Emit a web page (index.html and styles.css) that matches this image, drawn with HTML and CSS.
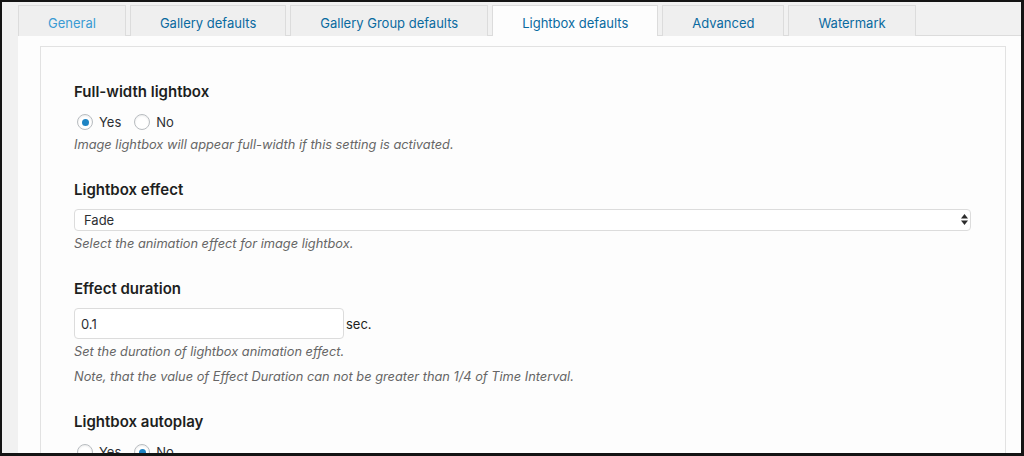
FILE: index.html
```html
<!DOCTYPE html>
<html lang="en">
<head>
    <meta charset="UTF-8">
    <meta name="viewport" content="width=device-width, initial-scale=1.0">
    <title>Lightbox defaults</title>
    <link rel="stylesheet" href="styles.css">
</head>
<body>
    <div class="frame">
        <!-- Settings tabs -->
        <div class="tabs">
            <a class="tab tab-general" href="#">General</a>
            <a class="tab" href="#">Gallery defaults</a>
            <a class="tab" href="#">Gallery Group defaults</a>
            <a class="tab active" href="#">Lightbox defaults</a>
            <a class="tab" href="#">Advanced</a>
            <a class="tab" href="#">Watermark</a>
        </div>

        <div class="panel">
            <div class="box">

                <!-- Full-width lightbox -->
                <div class="field">
                    <h3>Full-width lightbox</h3>
                    <div class="radios">
                        <label><input type="radio" name="fullwidth" checked> Yes</label>
                        <label><input type="radio" name="fullwidth"> No</label>
                    </div>
                    <p class="desc">Image lightbox will appear full-width if this setting is activated.</p>
                </div>

                <!-- Lightbox effect -->
                <div class="field">
                    <h3>Lightbox effect</h3>
                    <div class="select-wrap">
                        <select>
                            <option>Fade</option>
                        </select>
                        <svg class="select-arrows" width="7" height="11" viewBox="0 0 7 11">
                            <path d="M3.5 0 L7 4.5 L0 4.5 Z" fill="#2b2b2b"/>
                            <path d="M0 6.5 L7 6.5 L3.5 11 Z" fill="#2b2b2b"/>
                        </svg>
                    </div>
                    <p class="desc">Select the animation effect for image lightbox.</p>
                </div>

                <!-- Effect duration -->
                <div class="field">
                    <h3>Effect duration</h3>
                    <div class="duration">
                        <input type="text" class="text-input" value="0.1">
                        <span class="unit">sec.</span>
                    </div>
                    <p class="desc">Set the duration of lightbox animation effect.</p>
                    <p class="desc">Note, that the value of Effect Duration can not be greater than 1/4 of Time Interval.</p>
                </div>

                <!-- Lightbox autoplay -->
                <div class="field">
                    <h3>Lightbox autoplay</h3>
                    <div class="radios">
                        <label><input type="radio" name="autoplay"> Yes</label>
                        <label><input type="radio" name="autoplay" checked> No</label>
                    </div>
                </div>

            </div>
        </div>
    </div>
</body>
</html>
```

FILE: styles.css
```css
html, body {
    margin: 0;
    padding: 0;
    height: 100%;
}
body {
    font-family: Inter, "Noto Sans", sans-serif;
    background-color: #111;
}
.frame {
    box-sizing: border-box;
    height: 456px;
    border: solid #141414;
    border-width: 2px 3px 3px 2px;
    background-color: #f1f1f1;
    padding: 3px 0 0 16px;
    overflow: hidden;
}
.tabs {
    display: flex;
    gap: 4px;
    height: 30px;
    position: relative;
    z-index: 1;
}
.tab {
    box-sizing: border-box;
    height: 31px;
    padding: 3px 29px 0;
    display: flex;
    align-items: center;
    justify-content: center;
    background-color: #efefef;
    border: 1px solid #dcdcdc;
    border-bottom: none;
    font-size: 13px;
    color: #0a6aa0;
    text-decoration: none;
}
.tab-general {
    color: #3a9bd4;
}
.tab.active {
    background-color: #fdfdfd;
}
.panel {
    background-color: #fdfdfd;
    border-top: 1px solid #dcdcdc;
    padding: 10px 15px 0 22px;
    height: 420px;
}
.box {
    border: 1px solid #e2e2e2;
    border-bottom: none;
    background-color: #fdfdfd;
    padding: 35px 34px 0 33px;
    height: 420px;
}
.field {
    margin-bottom: 24px;
}
h3 {
    margin: 0 0 10px;
    font-size: 15px;
    font-weight: 600;
    color: #1d1f21;
    line-height: 20px;
}
.radios {
    display: flex;
    align-items: center;
    gap: 10px;
    font-size: 13px;
    color: #2c2f33;
    height: 20px;
}
.radios label {
    display: flex;
    align-items: center;
    gap: 6px;
}
input[type="radio"] {
    appearance: none;
    -webkit-appearance: none;
    box-sizing: border-box;
    width: 16px;
    height: 16px;
    margin: 0 0 0 3px;
    border: 1px solid #b8bcc0;
    border-radius: 50%;
    background-color: #fff;
    box-shadow: inset 0 1px 2px rgba(0, 0, 0, 0.08);
    display: flex;
    align-items: center;
    justify-content: center;
}
input[type="radio"]:checked::before {
    content: "";
    width: 7px;
    height: 7px;
    border-radius: 50%;
    background-color: #1e84c4;
}
.desc {
    margin: 2px 0 0;
    font-size: 12.8px;
    font-style: italic;
    color: #666;
    line-height: 22px;
}
.desc + .desc {
    margin-top: 3px;
}
.select-wrap {
    position: relative;
    margin-top: -1px;
}
select {
    appearance: none;
    -webkit-appearance: none;
    box-sizing: border-box;
    width: 100%;
    height: 22px;
    padding: 0 9px;
    border: 1px solid #dcdcdc;
    border-radius: 4px;
    background-color: #fff;
    font-family: inherit;
    font-size: 13px;
    color: #2c2f33;
}
.select-arrows {
    position: absolute;
    right: 3px;
    top: 5px;
}
.duration {
    display: flex;
    align-items: center;
    gap: 2px;
    margin-top: -1px;
}
.text-input {
    box-sizing: border-box;
    width: 270px;
    height: 31px;
    padding: 0 6px;
    border: 1px solid #dcdcdc;
    border-radius: 4px;
    background-color: #fff;
    font-family: inherit;
    font-size: 13px;
    color: #2c2f33;
}
.unit {
    font-size: 13px;
    color: #1d1f21;
}
```
